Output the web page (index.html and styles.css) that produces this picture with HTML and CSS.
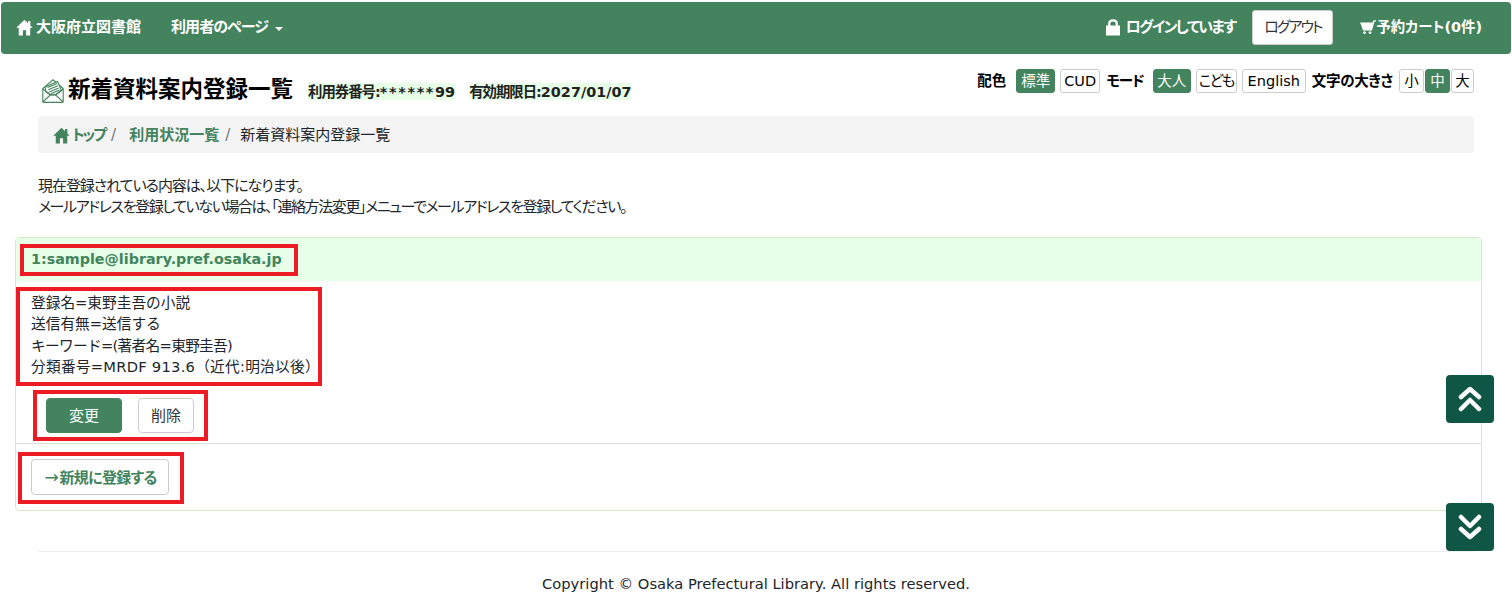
FILE: index.html
```html
<!DOCTYPE html>
<html lang="ja">
<head>
<meta charset="utf-8">
<title>新着資料案内登録一覧</title>
<link rel="stylesheet" href="styles.css">
</head>
<body>
<nav class="navbar">
  <div class="nav-group">
    <a class="nav-link brand"><svg class="ico-home" viewBox="0 0 16 16"><path d="M8 .8 .2 8.200H2.600V15.500H6.500V10.500H9.500V15.500H13.400V8.200H15.800L13.500 6V1.800H11.300V3.900z"/></svg>大阪府立図書館</a>
    <a class="nav-link user-link">利用者のページ<span class="caret"></span></a>
  </div>
  <div class="nav-group right">
    <span class="nav-link login"><svg class="ico-lock" viewBox="0 0 14 17"><path d="M0 6.500V16.500H14V6.500H12V4.800C12 2 10 .3 7 .3S2 2 2 4.800V6.500zM4.400 6.500V4.800C4.400 3.200 5.300 2.500 7 2.500S9.600 3.200 9.600 4.800V6.500z" fill-rule="evenodd"/></svg>ログインしています</span>
    <a class="logout">ログアウト</a>
    <a class="nav-link cart"><svg class="ico-cart" viewBox="0 0 16 15"><path d="M0 2.500H12.500L13.500 .3H16V1.600H14.500L12 10.500H3L1.500 6zM4.500 11.200a1.400 1.400 0 1 0 .01 0zM10 11.200a1.400 1.400 0 1 0 .01 0z"/></svg>予約カート(0件)</a>
  </div>
</nav>
<main class="container">
  <div class="title-row">
    <div class="title-left">
      <svg class="ico-mail" viewBox="0 0 22 24" fill="none" stroke="#43835d" stroke-width="1.100"><path d="M.8 9.500V22.500Q.8 23.400 1.800 23.400H20.200Q21.200 23.400 21.200 22.500V9.500L11 .8Z"/><path d="M3.200 8 15.500 2.500 19.500 11.500 13.500 16H8.500L3.800 12.800Z" fill="#fff"/><path d="M.8 23 8.500 15.800H13.500L21.200 23M.8 10 8.500 15.800M21.200 10 13.500 15.800"/><path d="M5.500 8.500 15 4.500M6.300 10.700 15.800 6.700M7.200 12.900 16.700 8.900M9 14.800 17.500 11"/></svg>
      <h1 class="page-title">新着資料案内登録一覧</h1>
      <span class="ticket first-ticket"><span class="cjk">利用券番号:</span><span class="stars">******</span>99</span>
      <span class="ticket"><span class="cjk">有効期限日:</span>2027/01/07</span>
    </div>
    <div class="settings">
      <span class="set-label color">配色</span>
      <a class="chip on w39">標準</a><a class="chip w40">CUD</a>
      <span class="set-label mode">モード</span>
      <a class="chip on w38">大人</a><a class="chip w41 kodomo">こども</a><a class="chip w64">English</a>
      <span class="set-label size">文字の大きさ</span>
      <span class="chip-group"><a class="chip tight">小</a><a class="chip tight on">中</a><a class="chip tight">大</a></span>
    </div>
  </div>
  <ol class="breadcrumb">
    <li><a class="crumb"><svg class="ico-home small" viewBox="0 0 16 16"><path d="M8 .8 .2 8.200H2.600V15.500H6.500V10.500H9.500V15.500H13.400V8.200H15.800L13.500 6V1.800H11.300V3.900z"/></svg><span class="top-text">トップ</span></a><span class="sep">/</span></li>
    <li><a class="crumb">利用状況一覧</a><span class="sep">/</span></li>
    <li>新着資料案内登録一覧</li>
  </ol>
  <div class="intro">
    <p class="line-a">現在登録されている内容は、以下になります。</p>
    <p class="line-b">メールアドレスを登録していない場合は、「連絡方法変更」メニューでメールアドレスを登録してください。</p>
  </div>
  <section class="panel">
    <header class="panel-head"><span class="mark head-mark">1:sample@library.pref.osaka.jp</span></header>
    <div class="panel-body">
      <div class="mark info">
        <p>登録名=東野圭吾の小説</p>
        <p>送信有無=送信する</p>
        <p class="kw">キーワード=(著者名=東野圭吾)</p>
        <p class="cls">分類番号=MRDF 913.6（近代:明治以後）</p>
      </div>
      <div class="mark actions"><a class="btn primary">変更</a><a class="btn">削除</a></div>
    </div>
    <footer class="panel-foot">
      <div class="mark new-mark"><a class="btn new"><span class="arrow">→</span>新規に登録する</a></div>
    </footer>
  </section>
  <footer class="page-foot">Copyright © Osaka Prefectural Library. All rights reserved.</footer>
</main>
<a class="scroll up"><svg viewBox="0 0 24 26" fill="none" stroke="#fff" stroke-width="4.500" stroke-linecap="round" stroke-linejoin="round"><path d="M3 11l9-8 9 8M3 23l9-9 9 9"/></svg></a>
<a class="scroll down"><svg viewBox="0 0 24 26" fill="none" stroke="#fff" stroke-width="4.500" stroke-linecap="round" stroke-linejoin="round"><path d="M3 3l9 9 9-9M3 15l9 8 9-8"/></svg></a>
</body>
</html>
```
FILE: styles.css
```css
* { box-sizing: border-box; }
html, body { margin: 0; padding: 0; }
body {
  font-family: "DejaVu Sans", "Noto Sans CJK JP", sans-serif;
  font-size: 15px;
  line-height: 21px;
  color: #212529;
  background: #fff;
  height: 605px;
  overflow: hidden;
}
p { margin: 0; }
.navbar {
  display: flex;
  justify-content: space-between;
  align-items: center;
  height: 52px;
  margin: 2px 1px 0;
  padding: 0 29px 2px 15px;
  background: #43835d;
  border-radius: 4px;
  color: #fff;
  font-feature-settings: "palt";
}
.nav-group { display: flex; align-items: center; }
.nav-link { color: #fff; font-weight: 700; font-size: 15px; display: flex; align-items: center; }
.brand { margin-right: 30px; }
.user-link { letter-spacing: -0.9px; }
.ico-home { width: 17px; height: 17px; fill: #fff; margin-right: 3px; }
.ico-home.small { fill: #43835d; margin-right: 2px; }
.caret {
  display: inline-block;
  margin-left: 7px;
  margin-top: 3px;
  border-top: 4px solid #fff;
  border-left: 4px solid transparent;
  border-right: 4px solid transparent;
}
.login { letter-spacing: -1.600px; }
.ico-lock { width: 14px; height: 17px; fill: #fff; margin-right: 6px; }
.logout {
  display: block;
  width: 81px;
  height: 35px;
  margin: 0 27px 0 17px;
  background: #fff;
  border: 1px solid #ccc;
  border-radius: 3px;
  color: #333;
  text-align: center;
  line-height: 33px;
  font-size: 15px;
  letter-spacing: -2px;
}
.cart { font-size: 14.400px; }
.ico-cart { width: 16px; height: 15px; fill: #fff; }
.container { padding: 0 38px; }
.title-row {
  display: flex;
  justify-content: space-between;
  align-items: flex-start;
  height: 62px;
}
.title-left { display: flex; align-items: flex-start; padding: 20px 0 0 4px; }
.ico-mail { width: 22px; height: 24px; margin: 5px 4px 0 0; }
.page-title { margin: 0 15px 0 0; font-size: 22.500px; line-height: 30px; font-weight: 700; color: #000; }
.ticket {
  margin: 9px 0 0;
  padding-top: 1px;
  font-size: 14.400px;
  font-weight: 700;
  line-height: 16px;
  color: #222;
  background: #e6ffe6;
}
.first-ticket { margin-right: 14px; }
.cjk { letter-spacing: -1px; }
.stars { letter-spacing: 1.700px; }
.settings { display: flex; align-items: center; padding-top: 15px; font-size: 14.500px; }
.set-label { font-weight: 700; color: #000; font-feature-settings: "palt"; white-space: nowrap; }
.set-label.color { margin-right: 10px; }
.set-label.mode { margin: 0 9px 0 1px; letter-spacing: -1px; }
.set-label.size { margin: 0 6px 0 1px; letter-spacing: -0.3px; }
.chip {
  display: block;
  height: 24px;
  margin-right: 5px;
  border: 1px solid #ccc;
  border-radius: 3px;
  line-height: 22px;
  color: #000;
  background: #fff;
  text-align: center;
  white-space: nowrap;
  font-feature-settings: "palt";
}
.kodomo { letter-spacing: -1.500px; }
.w38 { width: 38px; }
.w39 { width: 39px; }
.w40 { width: 40px; }
.w41 { width: 41px; }
.w64 { width: 64px; }
.chip.on { background: #43835d; border-color: #43835d; color: #fff; }
.chip-group { display: flex; gap: 1px; }
.chip.tight { margin: 0; width: 25px; }
.chip.tight:last-child { width: 23px; }
.breadcrumb {
  display: flex;
  align-items: center;
  list-style: none;
  height: 37px;
  margin: 0;
  padding: 2px 15px 0;
  background: #f4f4f4;
  border-radius: 4px;
  color: #212529;
}
.breadcrumb li { display: flex; align-items: center; }
.crumb { color: #43835d; font-weight: 700; display: flex; align-items: center; font-feature-settings: "palt"; }
.top-text { letter-spacing: -2px; }
.sep { color: #6c757d; margin: 0 13px 0 6px; }
.breadcrumb li:nth-child(2) .sep { margin-right: 10px; }
.intro { margin-top: 23px; color: #212529; font-feature-settings: "palt"; white-space: nowrap; }
.line-a { letter-spacing: -1.050px; }
.line-b { letter-spacing: -1.400px; }
.panel {
  margin: 19px -23px 0;
  width: 1467px;
  height: 274px;
  border: 1px solid #d6e9c6;
  border-radius: 4px;
}
.panel-head {
  height: 43px;
  background: #e6ffe6;
  padding-top: 6px;
}
.mark { border: 4px solid #ed1c24; }
.head-mark {
  display: inline-block;
  margin-left: 4px;
  width: 278px;
  height: 32px;
  padding-left: 7px;
  font-size: 14.300px;
  line-height: 22px;
  font-weight: 700;
  color: #43835d;
}
.panel-body { height: 163px; padding-top: 6px; border-bottom: 1px solid #ddd; }
.info { width: 306px; height: 99px; padding: 1px 0 0 11px; line-height: 21.300px; color: #212529; white-space: nowrap; font-size: 14.700px; }
.kw { letter-spacing: -0.700px; }
.cls { letter-spacing: 0.250px; }
.actions {
  display: flex;
  gap: 16px;
  align-items: center;
  width: 175px;
  height: 51px;
  margin: 4px 0 0 17px;
  padding-left: 9px;
}
.btn {
  display: block;
  height: 35px;
  border: 1px solid #ccc;
  border-radius: 4px;
  text-align: center;
  line-height: 34px;
  color: #333;
  background: #fff;
}
.btn.primary { width: 76px; background: #43835d; border-color: #43835d; color: #fff; }
.actions .btn:last-child { width: 56px; }
.panel-foot { padding: 8px 0 0 2px; }
.new-mark { display: flex; align-items: center; width: 166px; height: 52px; padding-left: 9px; }
.btn.new { width: 138px; height: 36px; margin-bottom: 2px; font-weight: 700; color: #43835d; line-height: 34px; letter-spacing: -0.700px; font-feature-settings: "palt"; white-space: nowrap; }
.arrow { display: inline-block; width: 16px; font-weight: 400; font-size: 17px; letter-spacing: 0; }
.page-foot {
  margin-top: 40px;
  padding-top: 21px;
  border-top: 1px solid #eee;
  text-align: center;
  color: #212529;
  font-size: 14.700px;
}
.scroll {
  position: fixed;
  left: 1446px;
  width: 48px;
  height: 48px;
  background: #0f5744;
  border-radius: 4px;
  display: flex;
  align-items: center;
  justify-content: center;
}
.scroll svg { width: 24px; height: 26px; }
.scroll.up { top: 375px; }
.scroll.down { top: 503px; }
```
